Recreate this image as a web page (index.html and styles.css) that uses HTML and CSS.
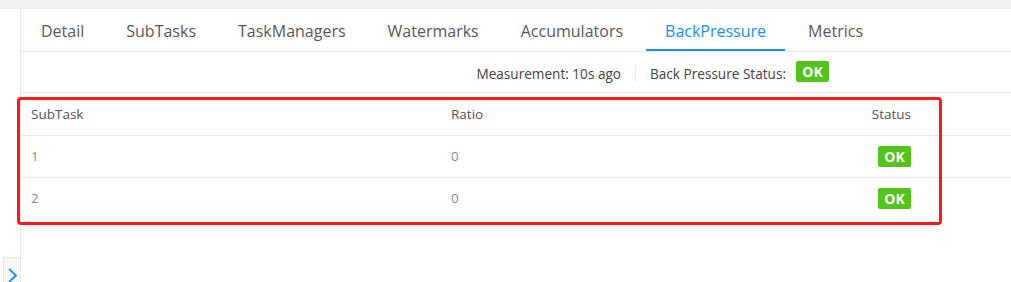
FILE: index.html
```html
<!DOCTYPE html>
<html>
<head>
<meta charset="utf-8">
<link rel="stylesheet" href="styles.css">
</head>
<body>
<div class="topbar"></div>
<div class="layout">
  <aside class="sider">
    <div class="trigger">
      <svg width="11" height="14" viewBox="0 0 11 14"><path d="M2 1 L9 7.5 L2 14" fill="none" stroke="#1890ff" stroke-width="1.8"/></svg>
    </div>
  </aside>
  <main class="main">
    <nav class="tabs">
      <div class="tab">Detail</div>
      <div class="tab">SubTasks</div>
      <div class="tab">TaskManagers</div>
      <div class="tab">Watermarks</div>
      <div class="tab">Accumulators</div>
      <div class="tab active">BackPressure</div>
      <div class="tab">Metrics</div>
    </nav>
    <div class="status-row">
      <span class="meta">Measurement: 10s ago</span>
      <span class="divider"></span>
      <span class="meta">Back Pressure Status:</span>
      <span class="badge">OK</span>
    </div>
    <div class="table-wrap">
      <table class="table">
        <thead>
          <tr><th class="c-sub">SubTask</th><th class="c-ratio">Ratio</th><th class="c-status">Status</th><th class="c-empty"></th></tr>
        </thead>
        <tbody>
          <tr><td class="c-sub">1</td><td class="c-ratio">0</td><td class="c-status"><span class="badge">OK</span></td><td class="c-empty"></td></tr>
          <tr class="last"><td class="c-sub">2</td><td class="c-ratio">0</td><td class="c-status"><span class="badge">OK</span></td><td class="c-empty"></td></tr>
        </tbody>
      </table>
      <div class="highlight"></div>
    </div>
  </main>
</div>
</body>
</html>
```
FILE: styles.css
```css
* { box-sizing: border-box; }
html, body { margin: 0; padding: 0; background: #fff; }
body {
  font-family: "Open Sans", "Noto Sans", "DejaVu Sans", sans-serif;
  color: #595959;
  width: 1011px;
  height: 282px;
  overflow: hidden;
}
.topbar { height: 9px; background: #f0f0f0; }
.layout { display: flex; height: 273px; }
.sider {
  width: 21px;
  border-right: 1px solid #e8e8e8;
  display: flex;
  flex-direction: column;
  justify-content: flex-end;
  align-items: flex-end;
}
.trigger {
  width: 17px;
  height: 25px;
  background: #f7f7f7;
  border: 1px solid #e6e6e6;
  border-right: none;
  border-bottom: none;
  display: flex;
  justify-content: center;
  align-items: flex-end;
  padding-left: 1px;
}
.main { flex: 1; position: relative; }
.tabs {
  display: flex;
  height: 43px;
  border-bottom: 1px solid #e8e8e8;
  padding-left: 1px;
}
.tab {
  padding: 5px 19px 0;
  margin-right: 4px;
  font-size: 16px;
  line-height: 35px;
  height: 42px;
  color: #595959;
  border-bottom: 2px solid transparent;
  white-space: nowrap;
}
.tab.active { color: #1890ff; border-bottom-color: #1890ff; }
.status-row {
  display: flex;
  align-items: center;
  justify-content: flex-end;
  height: 41px;
  padding-right: 182px;
  padding-top: 3px;
  border-bottom: 1px solid #e8e8e8;
  font-size: 13.6px;
  color: #444;
}
.divider { width: 1px; height: 16px; background: #e8e8e8; margin: 0 14px; }
.badge {
  display: inline-block;
  background: #52c41a;
  color: #fff;
  font-weight: 700;
  font-size: 14px;
  width: 33px;
  height: 21px;
  line-height: 21px;
  text-align: center;
  border-radius: 2px;
}
.status-row .badge { margin-left: 10px; margin-top: -4px; }
.table-wrap { position: relative; }
.table { width: 100%; border-collapse: collapse; font-size: 13.5px; }
.table th, .table td { height: 42px; padding: 0 10px; text-align: left; }
.table th { font-weight: 400; color: #555; }
.table td { color: #8c8c8c; }
.table tr { border-bottom: 1px solid #e8e8e8; }
.table tr.last { border-bottom: none; }
.c-sub { width: 420px; }
.c-ratio { width: 400px; }
.table .c-status { width: 80px; text-align: right; }
.c-empty { width: 90px; }
.highlight {
  position: absolute;
  left: -4px;
  top: 4px;
  width: 925px;
  height: 128px;
  border: 3px solid #fb1a1a;
  border-radius: 4px;
  pointer-events: none;
}
```
